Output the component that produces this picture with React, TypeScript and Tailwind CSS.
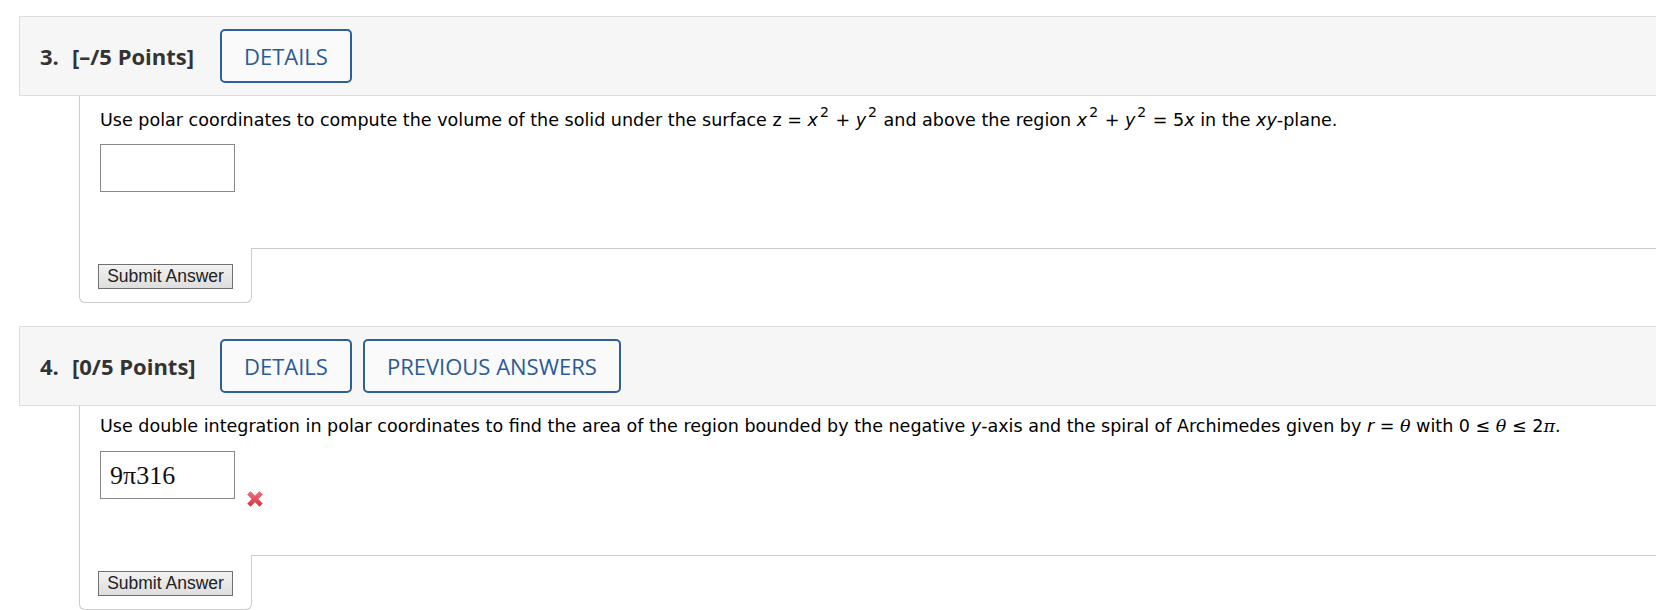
import React from "react";

const sans = { fontFamily: '"Open Sans", "Noto Sans", sans-serif' };
const q = { fontFamily: '"DejaVu Sans", Verdana, sans-serif' };
const serifI = { fontFamily: '"DejaVu Serif", serif' };

function RedX() {
  return (
    <svg width="20" height="20" viewBox="0 0 20 20" className="block">
      <defs>
        <linearGradient id="xg" x1="0" y1="0" x2="0" y2="1">
          <stop offset="0" stopColor="#f47078" />
          <stop offset="1" stopColor="#d92f3c" />
        </linearGradient>
      </defs>
      <path
        d="M2.5 5.5 L5.5 2.5 L10 7 L14.5 2.5 L17.5 5.5 L13 10 L17.5 14.5 L14.5 17.5 L10 13 L5.5 17.5 L2.5 14.5 L7 10 Z"
        fill="url(#xg)"
        stroke="#e0606a"
        strokeWidth="0.6"
        strokeLinejoin="round"
      />
    </svg>
  );
}

function Header({ num, points, buttons }: { num: string; points: string; buttons: string[] }) {
  return (
    <div className="ml-[19px] h-[80px] flex items-center bg-[#f6f6f6] border border-r-0 border-[#dddddd]">
      <div
        className="flex items-center text-[22px] font-bold text-[#333333] pl-[20px] w-[200px]"
        style={sans}
      >
        <span className="w-[32px]">{num}</span>
        <span>{points}</span>
      </div>
      <div className="flex gap-[11px]" style={sans}>
        {buttons.map((b) => (
          <div
            key={b}
            className="h-[54px] px-[22px] flex items-center border-2 border-[#2d6099] rounded-[5px] bg-[#fafafa] text-[22px] text-[#2a5b97]"
          >
            {b}
          </div>
        ))}
      </div>
    </div>
  );
}

function SubmitRow() {
  return (
    <div className="flex">
      <div className="w-[173px] h-[55px] border-l border-b border-r border-[#cccccc] rounded-b-[6px] pl-[18px] pt-[16px]">
        <button
          className="h-[25px] w-[135px] border border-[#707070] bg-gradient-to-b from-[#f2f2f2] to-[#dedede] text-[17.5px] leading-none text-[#222]"
          style={{ fontFamily: '"Liberation Sans", Arial, sans-serif' }}
        >
          Submit Answer
        </button>
      </div>
      <div className="flex-1 border-t border-[#cccccc]" />
    </div>
  );
}

function Sq() {
  return <sup className="text-[14px] ml-[2px] mr-[1px] -top-[0.65em]">2</sup>;
}

export default function App() {
  return (
    <div className="w-[1656px] h-[610px] bg-white overflow-hidden pt-[16px]">
      <Header num="3." points="[–/5 Points]" buttons={["DETAILS"]} />
      <div className="ml-[79px]">
        <div className="border-l border-[#cccccc] pl-[20px] pt-[14px] h-[152px]">
          <p className="text-[17.55px] leading-[20px] text-black" style={q}>
            Use polar coordinates to compute the volume of the solid under the surface z = <i>x</i>
            <Sq /> + <i>y</i>
            <Sq /> and above the region <i>x</i>
            <Sq /> + <i>y</i>
            <Sq /> = 5<i>x</i> in the <i>xy</i>-plane.
          </p>
          <div className="mt-[14px] w-[135px] h-[48px] border border-[#888888] bg-white" />
        </div>
        <SubmitRow />
      </div>

      <div className="h-[23px]" />

      <Header num="4." points="[0/5 Points]" buttons={["DETAILS", "PREVIOUS ANSWERS"]} />
      <div className="ml-[79px]">
        <div className="border-l border-[#cccccc] pl-[20px] pt-[10px] h-[149px]">
          <p className="text-[17.55px] leading-[20px] text-black" style={q}>
            Use double integration in polar coordinates to find the area of the region bounded by the negative <i>y</i>-axis and the spiral of Archimedes given by{" "}
            <i>r</i> = <i style={serifI}>θ</i> with 0 ≤ <i style={serifI}>θ</i> ≤ 2<i style={serifI}>π</i>.
          </p>
          <div className="flex items-end mt-[15px]">
            <div
              className="w-[135px] h-[48px] border border-[#888888] bg-white flex items-center pl-[9px] text-[26px] text-[#111]"
              style={{ fontFamily: '"Liberation Serif", "Times New Roman", serif' }}
            >
              9π316
            </div>
            <div className="ml-[10px] -mb-[10px]">
              <RedX />
            </div>
          </div>
        </div>
        <SubmitRow />
      </div>
    </div>
  );
}
